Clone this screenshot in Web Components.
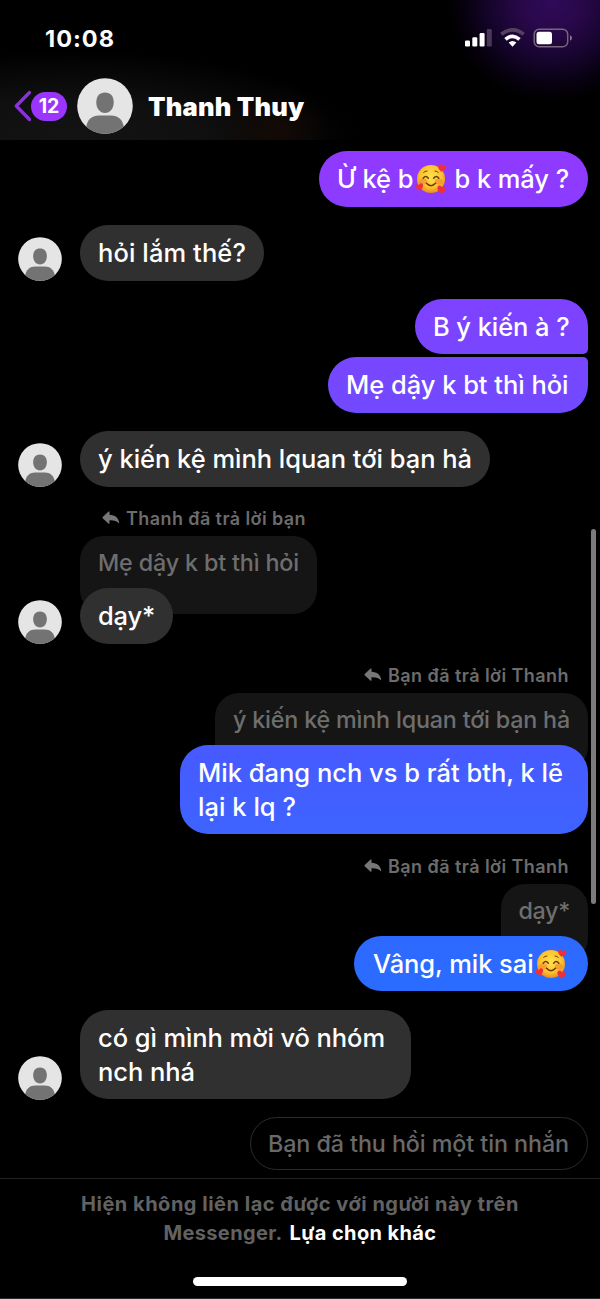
<!DOCTYPE html>
<html lang="vi">
<head>
<meta charset="utf-8">
<title>Thanh Thuy</title>
<style>
html,body{margin:0;background:#000}
body{width:600px;height:1299px;overflow:hidden;font-family:Inter,"Noto Sans",sans-serif;color:#fff}
</style>
</head>
<body>
<chat-screen>
  <status-bar slot="top"></status-bar>
  <chat-header slot="top"><fit-text w="156.5">Thanh Thuy</fit-text></chat-header>

  <chat-row side="out" style="margin-top:11.3px"><chat-bubble style="--w:269px;--bg:linear-gradient(#9039ff,#8b3cff)"><fit-text w="76.500">Ừ kệ b</fit-text><love-face></love-face><fit-text w="114.5" style="margin-left:8px">b k mấy ?</fit-text></chat-bubble></chat-row>
  <chat-row side="in" style="margin-top:18.5px"><chat-bubble><fit-text w="148">hỏi lắm thế?</fit-text></chat-bubble></chat-row>
  <chat-row side="out" style="margin-top:18.4px"><chat-bubble style="--w:173px;--bg:linear-gradient(#7d42ff,#7946ff);--r:28px 28px 5px 28px"><fit-text w="136.5">B ý kiến à ?</fit-text></chat-bubble></chat-row>
  <chat-row side="out" style="margin-top:3.1px"><chat-bubble style="--w:260px;--bg:linear-gradient(#7846ff,#714aff);--r:28px 5px 28px 28px"><fit-text w="222.500">Mẹ dậy k bt thì hỏi</fit-text></chat-bubble></chat-row>
  <chat-row side="in" style="margin-top:18.6px"><chat-bubble><fit-text w="374">ý kiến kệ mình lquan tới bạn hả</fit-text></chat-bubble></chat-row>

  <reply-label side="in" style="margin-top:18.6px"><fit-text w="180">Thanh đã trả lời bạn</fit-text></reply-label>
  <chat-quote side="in" style="--h:78px;--over:-26px"><fit-text w="201">Mẹ dậy k bt thì hỏi</fit-text></chat-quote>
  <chat-row side="in"><chat-bubble><fit-text w="57">dạy*</fit-text></chat-bubble></chat-row>

  <reply-label side="out" style="margin-top:18.6px"><fit-text w="181">Bạn đã trả lời Thanh</fit-text></reply-label>
  <chat-quote side="out" style="--h:78px;--over:-26px"><fit-text w="337">ý kiến kệ mình lquan tới bạn hả</fit-text></chat-quote>
  <chat-row side="out"><chat-bubble lines="2" style="--bg:linear-gradient(#475aff,#3e63ff);--w:408px"><fit-text w="365">Mik đang nch vs b rất bth, k lẽ</fit-text><fit-text w="98">lại k lq ?</fit-text></chat-bubble></chat-row>

  <reply-label side="out" style="margin-top:18.6px"><fit-text w="181">Bạn đã trả lời Thanh</fit-text></reply-label>
  <chat-quote side="out" style="--h:78px;--over:-26px"><fit-text w="51.500">dạy*</fit-text></chat-quote>
  <chat-row side="out"><chat-bubble style="--w:234px;--bg:linear-gradient(#2e69ff,#2a6cff)"><fit-text w="160.500" style="margin-left:1px">Vâng, mik sai</fit-text><love-face></love-face></chat-bubble></chat-row>

  <chat-row side="in" style="margin-top:18.6px"><chat-bubble lines="2" style="--w:331px"><fit-text w="287">có gì mình mời vô nhóm</fit-text><fit-text w="97">nch nhá</fit-text></chat-bubble></chat-row>
  <chat-row side="out" style="margin-top:18.4px"><unsent-note><fit-text w="301">Bạn đã thu hồi một tin nhắn</fit-text></unsent-note></chat-row>

  <chat-footer slot="bottom"></chat-footer>
</chat-screen>

<script>
function define(name, html, setup) {
  const tpl = document.createElement('template');
  tpl.innerHTML = html;
  customElements.define(name, class extends HTMLElement {
    connectedCallback() {
      if (this.shadowRoot) return;
      this.attachShadow({ mode: 'open' }).append(tpl.content.cloneNode(true));
      if (setup) setup(this);
    }
  });
}

define('chat-screen', `
<style>
:host{display:flex;flex-direction:column;position:relative;box-sizing:border-box;width:600px;height:1299px;overflow:hidden;background:#000}
.top{height:140px;flex:none;display:flex;flex-direction:column;background:
 radial-gradient(ellipse 105px 100px at 552px 2px,#300a58 0,#280849 30%,#14042a 62%,#07010f 83%,transparent),
 radial-gradient(ellipse 55px 45px at 275px 132px,#130a06 0,transparent),
 radial-gradient(ellipse 290px 90px at 70px 140px,#131313 0,#101010 45%,transparent)}
.log{flex:1;display:flex;flex-direction:column;padding:0 12px 0 18px}
.thumb{position:absolute;left:591px;top:529px;width:5px;height:375px;border-radius:3px;background:#7c7c7c}
</style>
<div class="top"><slot name="top"></slot></div>
<div class="log"><slot></slot></div>
<slot name="bottom"></slot>
<div class="thumb"></div>`);

define('status-bar', `
<style>
:host{display:flex;justify-content:space-between;box-sizing:border-box;height:72px;padding:24px 27px 0 45px;font-weight:700;font-size:23.500px;line-height:30px}
svg{display:block;margin-top:4px}
</style>
<fit-text w="70">10:08</fit-text>
<svg width="108" height="21" viewBox="0 0 108 21">
 <g fill="#fff"><rect x="0" y="12.5" width="5" height="6" rx="1.3"/><rect x="7.3" y="9.3" width="5" height="9.200" rx="1.3"/><rect x="14.600" y="5" width="5" height="13.500" rx="1.300"/></g>
 <rect x="21.800" y="1" width="5" height="17.500" rx="1.300" fill="#4b3658"/>
 <g fill="none" stroke-width="3.700"><path d="M36.300 6.300Q47.500-2.500 58.700 6.300" stroke="#55415f"/><path d="M40.500 11.300Q47.500 5.300 54.500 11.300" stroke="#fff"/></g>
 <path d="M43.600 14.600Q47.500 11.300 51.400 14.600L47.500 18.700Z" fill="#fff"/>
 <rect x="69.200" y="1.200" width="33.500" height="17.600" rx="5" fill="none" stroke="#77657f" stroke-width="1.500"/>
 <rect x="71.500" y="3.700" width="15.500" height="12.600" rx="2.500" fill="#fff"/>
 <path d="M105 7.300Q107 8 107 10T105 12.700Z" fill="#86788c"/>
</svg>`);

define('user-avatar', `
<style>:host{display:block;flex:none;width:44px;height:44px}svg{display:block;width:100%;height:100%}</style>
<svg viewBox="0 0 56 56"><defs><clipPath id="c"><circle cx="28" cy="28" r="27.800"/></clipPath></defs>
<g clip-path="url(#c)"><rect width="56" height="56" fill="#e5e5e5"/>
<path d="M28 14.500C33.500 14.500 36.700 18 36.700 24.500C36.700 30.500 33 35 28 35S19.300 30.500 19.300 24.500C19.300 18 22.500 14.500 28 14.500Z" fill="#737373"/>
<path d="M9 56V50C10 41.500 15 37.500 22 37.500H34C41 37.500 46 41.500 47 50V56Z" fill="#737373"/></g></svg>`);

define('chat-header', `
<style>
:host{display:flex;align-items:center;height:68px;padding-left:14px;font-size:25.500px;font-weight:900}
.chev{display:block;flex:none}
.badge{display:flex;justify-content:center;width:36px;height:29px;line-height:29px;border-radius:15px;background:#9b35fc;font-size:19.500px;font-weight:700;margin-right:10px}
user-avatar{width:56px;height:56px;margin-right:15px}
</style>
<svg class="chev" width="17" height="32" viewBox="0 0 17 32"><path d="M15.500 2.500L2.300 16L15.500 29.500" fill="none" stroke="#8c31dc" stroke-width="3.300" stroke-linecap="round" stroke-linejoin="round"/></svg>
<div class="badge">12</div>
<user-avatar></user-avatar>
<slot></slot>`);

/* One line of text, tracked so that its advance equals the "w" attribute. */
define('fit-text', `<style>:host{display:block;flex:none}span{display:inline-block;vertical-align:top;white-space:nowrap}</style><span><slot></slot></span>`, el => {
  const span = el.shadowRoot.querySelector('span');
  el.fit = () => {
    span.style.letterSpacing = '0';
    const n = [...el.textContent.normalize('NFC')].length;
    const w = parseFloat(el.getAttribute('w'));
    span.style.letterSpacing = ((w - span.getBoundingClientRect().width) / n) + 'px';
    el.style.width = w + 'px';
  };
});

define('love-face', `
<style>:host{display:block;flex:none;width:32px;height:32px;margin:0 0 0 1px}svg{display:block}</style>
<svg width="32" height="32" viewBox="0 0 32 32">
<defs><radialGradient id="g" cx=".5" cy=".42" r=".58"><stop offset="0" stop-color="#ffe04d"/><stop offset=".65" stop-color="#fcc530"/><stop offset="1" stop-color="#ec8a1e"/></radialGradient>
<path id="h" d="M0 3.900C-3.500 1.500-4.500 0-4.100-1.800C-3.600-3.700-1.100-3.900 0-1.900C1.100-3.900 3.600-3.700 4.100-1.800C4.500 0 3.500 1.500 0 3.900Z"/></defs>
<circle cx="16" cy="16" r="14" fill="url(#g)"/>
<ellipse cx="8.300" cy="18.500" rx="4" ry="3" fill="#f47b32" opacity=".55"/><ellipse cx="23.700" cy="18.500" rx="4" ry="3" fill="#f47b32" opacity=".55"/>
<g fill="none" stroke="#6d3b0b" stroke-width="1.500" stroke-linecap="round"><path d="M8.200 15.300Q10.800 11.800 13.300 15.300M18.700 15.300Q21.200 11.800 23.800 15.300M11.500 20.300Q16 25 20.500 20.300"/><path d="M8.600 9.400Q10 8 12 8M20 8Q22 8 23.300 9.400" stroke-width="1"/></g>
<g fill="#ee2f3e"><use href="#h" transform="translate(27 5) rotate(12)"/><use href="#h" transform="translate(4.500 24) rotate(-15) scale(.95)"/><use href="#h" transform="translate(26.500 26.500) rotate(12) scale(1.050)"/></g>
</svg>`);

define('chat-row', `
<style>
:host{display:flex;flex:none;align-items:flex-end;position:relative}
:host([side=out]){justify-content:flex-end}
user-avatar{margin:0 18px -.6px 0}
:host([side=out]) user-avatar{display:none}
</style><user-avatar></user-avatar><slot></slot>`);

define('chat-bubble', `
<style>
:host{display:flex;align-items:center;box-sizing:border-box;height:55.4px;width:var(--w,auto);padding:0 18px;border-radius:var(--r,28px);background:var(--bg,#303030);font-size:25.500px;font-weight:550;line-height:34px}
:host([lines]){height:89px;flex-direction:column;align-items:flex-start;justify-content:center;padding-top:1px}
</style><slot></slot>`);

define('chat-quote', `
<style>
:host{display:flex;flex:none;box-sizing:border-box;height:var(--h);margin:0 0 var(--over) 62px;padding:10.500px 18px 0;border-radius:24px;align-self:flex-start;background:#151515;color:#6e6e6e;font-size:23.300px;font-weight:550;line-height:32px}
:host([side=out]){align-self:flex-end;margin-left:0}
</style><slot></slot>`);

define('reply-label', `
<style>
:host{display:flex;flex:none;align-items:center;height:31px;box-sizing:border-box;padding:0 0 5px 84px;gap:6px;color:#6c6c6c;font-size:18px;font-weight:600;line-height:25px}
:host([side=out]){justify-content:flex-end;padding:0 19px 5px 0}
svg{display:block}
</style>
<svg width="18" height="14" viewBox="0 0 18 14"><path d="M7.500.8V3.800C13 3.900 16.800 7 17.300 12.500C14.500 9.800 11.800 9 7.500 9.200V12.300Q7.300 13.300 6.300 12.500L.7 7.300Q.2 6.700.7 6.100L6.300.7Q7.300 0 7.500.8Z" fill="#777"/></svg>
<slot></slot>`);

define('unsent-note', `
<style>
:host{display:flex;align-items:center;box-sizing:border-box;height:53px;width:338px;padding:0 17px;border:1.500px solid #2b2b2b;border-radius:27px;color:#696969;font-size:23.300px;font-weight:550;line-height:32px}
</style><slot></slot>`);

define('chat-footer', `
<style>
:host{display:flex;flex:none;flex-direction:column;align-items:center;box-sizing:border-box;height:121px;border-top:1px solid #242424;border-bottom:1px solid #2a2a2a;padding-top:10.500px;font-size:20px;font-weight:700;line-height:29.500px;color:#626262}
.line{display:flex;gap:7px}
b{font-weight:700;color:#fff}
.home{width:214px;height:9px;border-radius:5px;background:#fff;margin-top:28.500px}
</style>
<fit-text w="438">Hiện không liên lạc được với người này trên</fit-text>
<div class="line"><fit-text w="119">Messenger.</fit-text><b><fit-text w="147">Lựa chọn khác</fit-text></b></div>
<div class="home"></div>`);

/* Track every line once all the styles that it inherits are in place. */
(function fitAll(root) {
  root.querySelectorAll('*').forEach(el => {
    if (el.fit) el.fit();
    if (el.shadowRoot) fitAll(el.shadowRoot);
  });
})(document);
</script>
</body>
</html>
